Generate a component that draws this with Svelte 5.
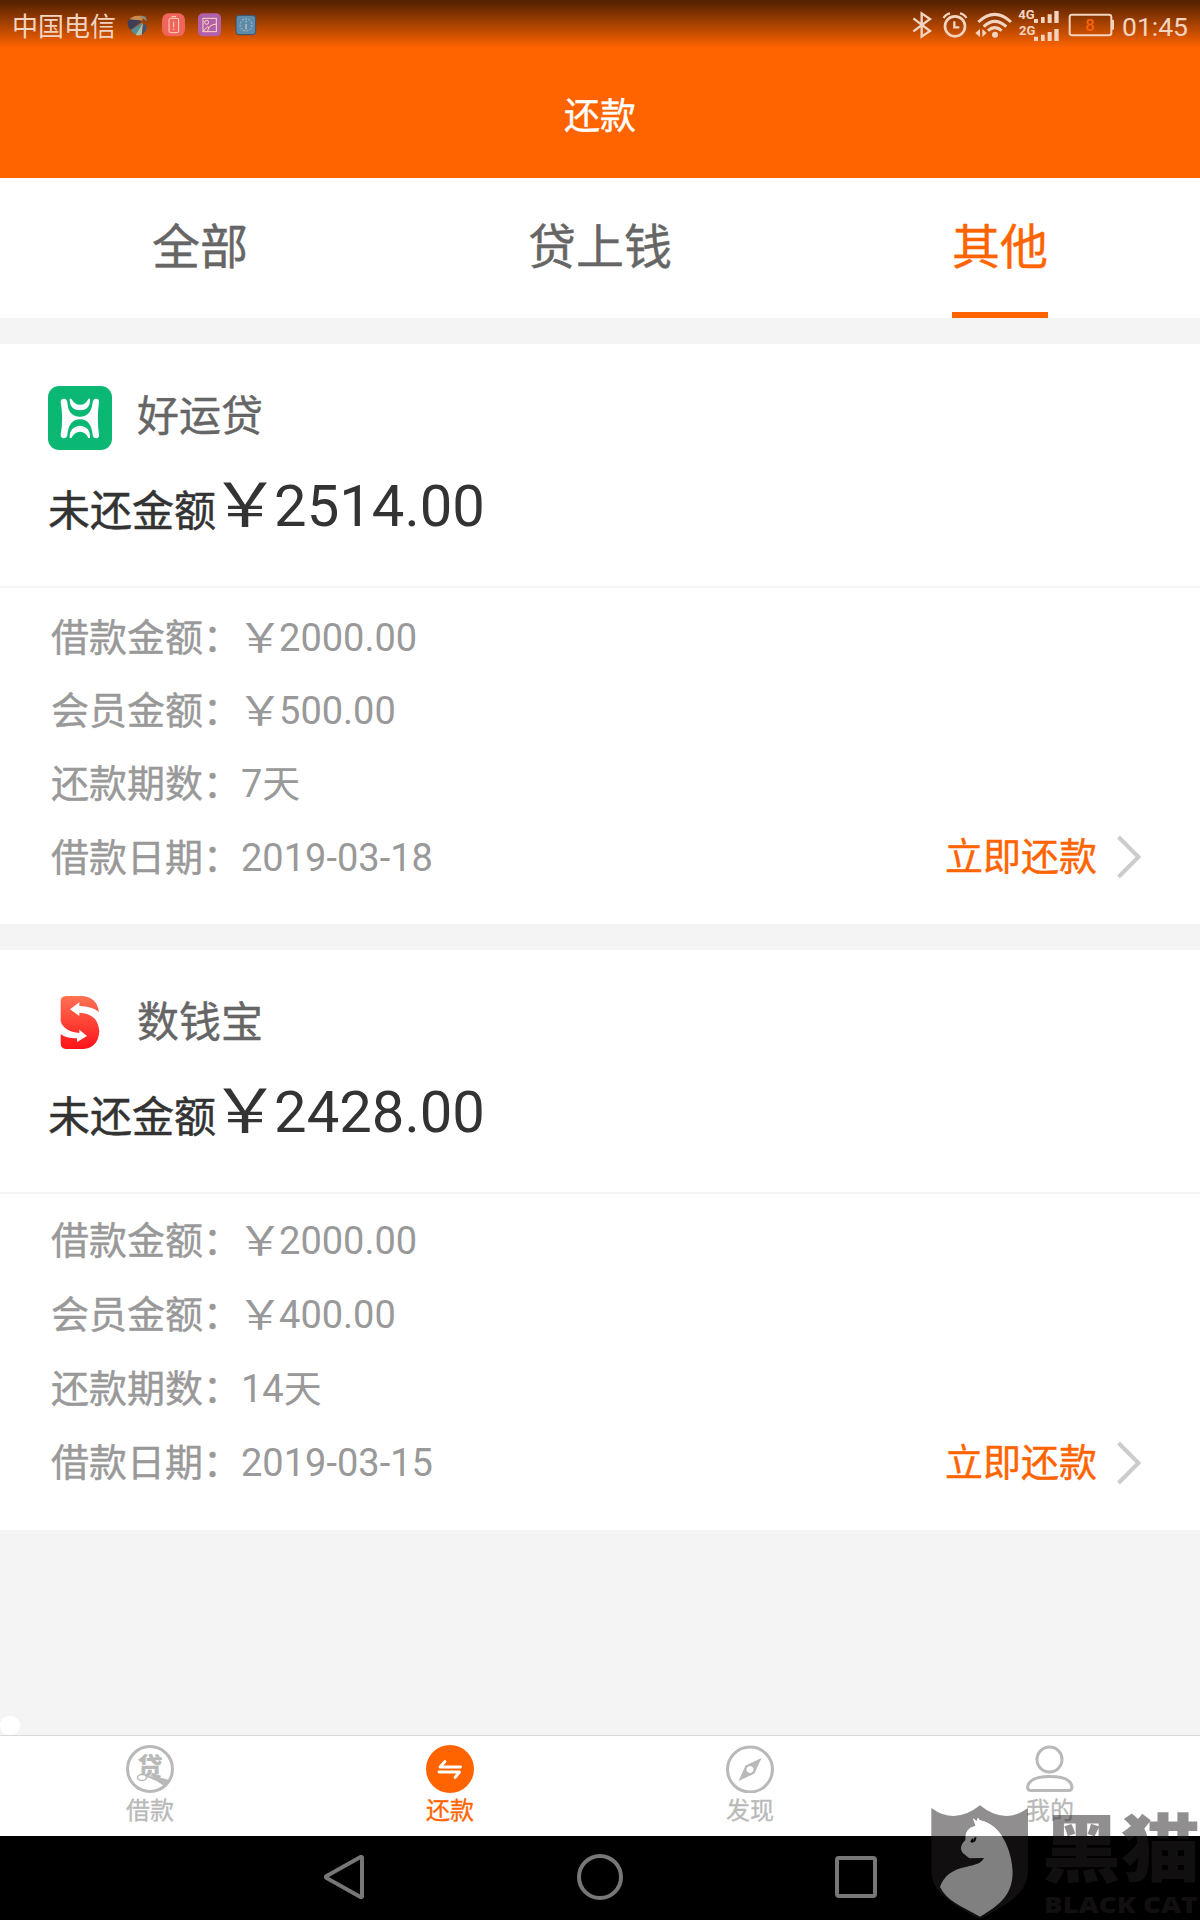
<script>
  const tabs = ['全部', '贷上钱', '其他'];
  let active = $state(2);

  const loans = [
    {
      logo: 'haoyun',
      name: '好运贷',
      due: '2514.00',
      rows: [['借款金额', '￥2000.00'], ['会员金额', '￥500.00'], ['还款期数', '7天'], ['借款日期', '2019-03-18']]
    },
    {
      logo: 'shuqian',
      name: '数钱宝',
      due: '2428.00',
      rows: [['借款金额', '￥2000.00'], ['会员金额', '￥400.00'], ['还款期数', '14天'], ['借款日期', '2019-03-15']]
    }
  ];

  const menu = [
    { id: 'loan', label: '借款' },
    { id: 'repay', label: '还款' },
    { id: 'discover', label: '发现' },
    { id: 'mine', label: '我的' }
  ];
</script>

<div class="screen">
  <header>
    <div class="status">
      <span class="carrier">中国电信</span>
      <svg class="notes" width="140" height="60" viewBox="370 0 420 180">
        <g>
          <path d="M388 60 Q404 42 430 50 L428 62 Z" fill="#c98a4e" />
          <path d="M384 68 Q384 60 390 58 L426 62 L394 90 Q384 82 384 68Z" fill="#3c3f58" />
          <path d="M394 90 L430 66 L408 105 Q398 98 394 90Z" fill="#4e8f9c" />
          <path d="M408 105 L430 68 L426 104 Q416 108 408 105Z" fill="#a9c0ad" />
          <path d="M431 70 L441 78 Q440 96 427 104Z" fill="#35577f" />
          <path d="M420 46 L438 50 L442 64 L432 58 Z" fill="#7f8c86" />
        </g>
        <rect x="487" y="40" width="69" height="69" rx="20" fill="#f0645c" />
        <g fill="none" stroke="#ffd9b8" stroke-width="3">
          <rect x="508" y="55" width="29" height="43" rx="5" />
          <path d="M516 50H529M522 65V82M522 86V90" />
        </g>
        <rect x="595" y="40" width="69" height="69" rx="14" fill="#b160ab" />
        <g fill="none" stroke="#ffd9b8" stroke-width="3">
          <rect x="610" y="55" width="40" height="40" />
          <circle cx="621" cy="67" r="6" />
          <path d="M610 94L624 80L630 84M624 94Q626 74 650 72" />
        </g>
        <rect x="709" y="46" width="59" height="58" rx="9" fill="#5c8bab" stroke="#38516a" stroke-width="3" />
        <circle cx="739" cy="75" r="18" fill="none" stroke="#b7c0b9" stroke-width="3" stroke-dasharray="6 4" />
        <path d="M739 63V67M739 72V88" stroke="#dcd2bd" stroke-width="3" />
      </svg>
      <svg class="signals" width="230" height="60" viewBox="0 0 690 180">
        <g fill="none" stroke="#f3d4c0" stroke-width="7">
          <path d="M67 55L117 93L92 110V40L117 57L67 94" />
          <circle cx="192" cy="79" r="30" stroke-width="8" />
          <path d="M190 64V82H205" />
          <path d="M158 54Q163 43 177 40M207 40Q221 43 226 54" />
          <path d="M262 66Q311 20 360 66" stroke-width="9" />
          <path d="M278 80Q311 48 346 80" stroke-width="9" />
          <path d="M291 92Q311 74 332 92" stroke-width="9" />
          <rect x="536" y="44" width="125" height="62" rx="7" stroke-width="6" />
        </g>
        <g fill="#f3d4c0">
          <circle cx="312" cy="104" r="9" />
          <path d="M253 99L267 87V111ZM287 99L274 87V111Z" />
          <path d="M429 57h12v12h-12zM450 51h11v18h-11zM470 43h12v26h-12zM490 33h13v36h-13z" />
          <path d="M429 110h12v13h-12zM450 104h11v19h-11zM470 96h12v27h-12zM490 87h13v36h-13z" />
          <path d="M661 59h5q3 0 3 3v24q0 3-3 3h-5z" />
          <text class="net" x="382" y="57">4G</text>
          <text class="net" x="384" y="106">2G</text>
        </g>
        <text class="level" x="597" y="94">8</text>
      </svg>
      <span class="time">01:45</span>
    </div>
    <h1>还款</h1>
  </header>

  <nav class="tabs">
    {#each tabs as tab, i}
      <button class="tab" class:on={i === active} onclick={() => (active = i)}>
        <span>{tab}</span>
      </button>
    {/each}
  </nav>

  <main>
    {#each loans as loan}
      <section class="card">
        <div class="summary">
          <div class="brand">
            {#if loan.logo === 'haoyun'}
              <svg width="64" height="64" viewBox="0 0 192 192">
                <rect width="192" height="192" rx="34" fill="#0ab873" />
                <path
                  fill="#fff"
                  d="M38 48Q38 39 47 38Q56 38 58 48Q60 92 96 92Q130 92 134 48Q136 38 145 38Q154 39 153 48Q146 98 153 146Q154 156 145 157Q136 157 134 148Q130 100 96 100Q62 100 58 148Q56 157 47 157Q38 156 38 146Q47 98 38 48Z"
                />
                <path fill="#fff" d="M65 38H70Q79 56 96 56Q114 56 121 38H126Q128 71 96 73Q64 71 65 38Z" />
                <path fill="#fff" d="M65 156H70Q79 138 96 137Q114 138 121 156H126Q128 122 96 119Q64 122 65 156Z" />
              </svg>
            {:else}
              <svg width="64" height="64" viewBox="0 0 192 192">
                <defs>
                  <linearGradient id="red" x1="0" y1="0" x2="0" y2="1">
                    <stop offset="0" stop-color="#ff7354" />
                    <stop offset="1" stop-color="#ff1219" />
                  </linearGradient>
                </defs>
                <path
                  fill="url(#red)"
                  d="M54 12H104Q146 15 153 60Q134 43 94 42V31L66 52L94 72V62Q150 64 154 118Q150 168 106 171H54Q38 170 38 154V126Q56 140 87 139V150L117 132L94 113V123Q48 119 38 88V28Q38 13 54 12Z"
                />
              </svg>
            {/if}
            <h2>{loan.name}</h2>
          </div>
          <p class="due"><span>未还金额</span><b><i class="yen">￥</i>{loan.due}</b></p>
        </div>
        <div class="details">
          <dl>
            {#each loan.rows as [key, value]}
              <div class="row">
                <dt>{key}：</dt>
                <dd>{#if value.startsWith('￥')}<i class="yen">￥</i>{value.slice(1)}{:else}{value}{/if}</dd>
              </div>
            {/each}
          </dl>
          <a class="pay" href="#pay">
            <span>立即还款</span>
            <svg width="24" height="44" viewBox="0 0 24 44"><path d="M1.5 2L21.500 22L1.500 42" /></svg>
          </a>
        </div>
      </section>
    {/each}
    <i class="bubble"></i>
  </main>

  <nav class="menu">
    {#each menu as item}
      <a class="item" class:on={item.id === 'repay'} href="#{item.id}">
        <svg width="48" height="48" viewBox="0 0 48 48">
          {#if item.id === 'loan'}
            <circle cx="24" cy="24" r="22.500" class="line" />
            <text class="mark" x="24" y="31">贷</text>
            <path d="M20 31Q31 31 43 35L38.500 41Q31 35 20 32Z" class="solid" />
            <ellipse cx="16" cy="32.500" rx="4.500" ry="3" class="thin" />
          {:else if item.id === 'repay'}
            <circle cx="24" cy="24" r="24" class="solid" />
            <path d="M34.500 22H14L19 16.500M13 27H33.500L29 32.500" class="swap" />
          {:else if item.id === 'discover'}
            <circle cx="24" cy="24.500" r="22.500" class="line" />
            <path fill-rule="evenodd" class="solid" d="M35.500 13L28.500 28.500L12.500 36L19.500 20.500ZM24 21a3.500 3.500 0 1 0 .01 0Z" />
          {:else}
            <circle cx="23.500" cy="14.500" r="12.500" class="line" />
            <path class="line" d="M5 45.500Q1.500 45.500 1.500 42C3 34 12 31.500 24 31.500S45 34 46 42Q46 45.500 42.500 45.500Z" />
          {/if}
        </svg>
        <span>{item.label}</span>
      </a>
    {/each}
  </nav>

  <footer>
    <svg width="42" height="46" viewBox="0 0 42 46"><path d="M39 3.500V42.500Q38.500 43.500 37.500 43L3.500 24Q2.500 23 3.500 22L37.500 3Q38.500 2.500 39 3.500Z" /></svg>
    <svg width="46" height="46" viewBox="0 0 46 46"><circle cx="23" cy="23" r="21" /></svg>
    <svg width="42" height="42" viewBox="0 0 42 42"><rect x="2" y="2" width="38" height="38" rx="2" /></svg>
  </footer>

  <svg class="watermark" width="300" height="140" viewBox="0 0 900 420">
    <g fill="#231f20">
      <path
        fill-rule="evenodd"
        d="M94 84Q165 136 240 76Q313 136 384 84V270C384 330 345 362 240 417C135 362 94 330 94 270ZM219 115L227 138C205 142 196 156 196 180C180 195 179 212 192 222L208 235L252 234C240 254 222 254 200 260C155 268 130 290 120 321C140 362 180 376 240 410C305 372 338 340 338 275C336 215 305 132 239 121L234 113L230 124Z"
      />
      <text class="han" x="426" y="289" textLength="474" lengthAdjust="spacingAndGlyphs">黑猫</text>
      <text class="latin" x="432" y="398" textLength="460" lengthAdjust="spacingAndGlyphs">BLACK CAT</text>
    </g>
    <path
      fill="#fff"
      d="M219 115L227 138C205 142 196 156 196 180C180 195 179 212 192 222L208 235L252 234C240 254 222 254 200 260C155 268 130 290 120 321C140 362 180 376 240 410C305 372 338 340 338 275C336 215 305 132 239 121L234 113L230 124Z"
    />
    <path d="M211 186Q213 174 229 171Q229 186 217 188Z" fill="#000" />
    <path d="M219 174L223 173L221 184Z" fill="#ccc" />
  </svg>
</div>

<style>
  :global(body) {
    margin: 0;
  }

  .screen {
    position: relative;
    display: flex;
    flex-direction: column;
    width: 1200px;
    height: 1920px;
    overflow: hidden;
    background: #f4f4f4;
    font-family: Roboto, 'Noto Sans CJK SC', sans-serif;
  }

  header {
    height: 178px;
    color: #fff;
    background: linear-gradient(#562200 2px, #ff6400 48px);
  }

  .status {
    display: flex;
    align-items: center;
    height: 52px;
    padding: 0 12px;
    color: #f3d4c0;
  }

  .carrier {
    margin-bottom: 4px;
    font-size: 26px;
  }

  .notes {
    margin: 8px auto 0 7px;
  }

  .signals {
    margin-top: 8px;
  }

  .time {
    padding-left: 1px;
    font-size: 26.5px;
  }

  .net {
    font: 700 39px Roboto, sans-serif;
  }

  .level {
    fill: #ff6400;
    font: 500 50px Roboto, sans-serif;
    text-anchor: middle;
  }

  h1 {
    margin: 0;
    font-size: 36px;
    font-weight: 400;
    line-height: 130px;
    text-align: center;
    -webkit-text-stroke: 0.4px;
  }

  .tabs {
    display: grid;
    grid-template-columns: repeat(3, 1fr);
    height: 140px;
    background: #fff;
  }

  .tab {
    display: flex;
    justify-content: center;
    padding: 0;
    border: 0;
    background: none;
    color: #666;
    font: inherit;
    font-size: 48px;
    -webkit-text-stroke: 0.4px;
  }

  .tab span {
    box-sizing: border-box;
    height: 140px;
    border-bottom: 6px solid transparent;
    line-height: 140px;
  }

  .tab.on span {
    border-color: #ff6400;
    color: #ff6400;
  }

  main {
    position: relative;
    display: flex;
    flex: 1;
    flex-direction: column;
    gap: 26px;
    padding-top: 26px;
  }

  .card {
    height: 580px;
    background: #fff;
  }

  .summary {
    box-sizing: border-box;
    height: 244px;
    padding: 42px 48px 0;
    border-bottom: 2px solid #f4f4f4;
  }

  .brand {
    display: flex;
    gap: 25px;
    height: 64px;
  }

  h2 {
    margin: 0;
    color: #666;
    font-size: 42px;
    font-weight: 400;
    line-height: 62px;
    -webkit-text-stroke: 0.4px;
  }

  .due {
    display: flex;
    align-items: baseline;
    margin: 14px 0 0;
    color: #333;
    font-size: 42px;
    line-height: 84px;
  }

  .due span {
    -webkit-text-stroke: 0.5px;
  }

  .due b {
    font-size: 58px;
    font-weight: 400;
  }

  .yen {
    display: inline-block;
    font-style: normal;
    transform: scale(1.2, 1.06);
  }

  .details {
    display: flex;
    align-items: flex-end;
    justify-content: space-between;
    height: 306px;
    padding: 0 59px 0 51px;
    font-size: 38px;
  }

  dl {
    margin: 0;
    color: #999;
  }

  .row {
    display: flex;
    height: 73.3px;
    line-height: 74px;
  }

  .card:nth-child(2) .row {
    height: 74px;
  }

  dt {
    -webkit-text-stroke: 0.4px;
  }

  dd {
    margin: 0;
  }

  .pay {
    display: flex;
    align-items: center;
    gap: 20px;
    color: #ff6400;
    line-height: 74px;
    text-decoration: none;
    -webkit-text-stroke: 0.4px;
  }

  .pay path {
    fill: none;
    stroke: #ccc;
    stroke-width: 4;
  }

  .bubble {
    position: absolute;
    bottom: 0;
    left: 0;
    width: 20px;
    height: 19px;
    border-radius: 9px;
    background: #fff;
  }

  .menu {
    display: grid;
    grid-template-columns: repeat(4, 1fr);
    height: 100px;
    border-top: 1px solid #d9d9d9;
    background: #fff;
  }

  .item {
    display: flex;
    flex-direction: column;
    align-items: center;
    padding-top: 9px;
    color: #b9b9b9;
    font-size: 24px;
    line-height: 36px;
    text-decoration: none;
  }

  .item span {
    -webkit-text-stroke: 0.3px;
  }

  .item.on {
    color: #ff6400;
  }

  .line {
    fill: none;
    stroke: currentColor;
    stroke-width: 3;
  }

  .thin {
    fill: #fff;
    stroke: currentColor;
    stroke-width: 1.500;
  }

  .solid {
    fill: currentColor;
  }

  .mark {
    fill: currentColor;
    font: 900 25px 'Noto Sans CJK SC', sans-serif;
    text-anchor: middle;
  }

  .swap {
    fill: none;
    stroke: #fff;
    stroke-width: 2.800;
    stroke-linecap: round;
    stroke-linejoin: round;
  }

  footer {
    box-sizing: border-box;
    display: flex;
    align-items: center;
    justify-content: space-between;
    height: 84px;
    padding: 0 323px 2px;
    background: #000;
  }

  footer svg {
    fill: none;
    stroke: #777;
    stroke-width: 4;
  }

  .watermark {
    position: absolute;
    right: 0;
    bottom: 0;
    opacity: 0.5;
  }

  .han {
    font: 900 220px 'Noto Sans CJK SC', sans-serif;
  }

  .latin {
    font: 800 70px 'Open Sans', sans-serif;
  }
</style>
